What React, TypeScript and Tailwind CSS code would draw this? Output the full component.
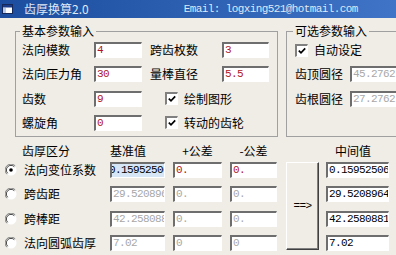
import type { ReactNode } from "react";

const cjk = "font-['Noto_Sans_CJK_SC',sans-serif] text-[12px] leading-[14px]";
const mono = "font-['Liberation_Mono',monospace] text-[11px] tracking-[-0.6px]";

type Tone = "red" | "gray" | "dark";

const toneClass: Record<Tone, string> = {
  red: "text-[#b0141e]",
  gray: "text-[#a8a8a8]",
  dark: "text-black",
};

function Field({
  value,
  w,
  tone = "red",
  selected = false,
}: {
  value: string;
  w: string;
  tone?: Tone;
  selected?: boolean;
}) {
  return (
    <div
      className={`${w} h-4 shrink-0 overflow-hidden whitespace-nowrap border-t-2 border-l-2 border-r border-b border-t-[#6e6e6e] border-l-[#6e6e6e] border-r-white border-b-white ${
        selected ? "bg-[#d7e6f6]" : "bg-white"
      }`}
    >
      <span
        className={`block ${mono} leading-[13px] ${toneClass[tone]} ${
          selected ? "-ml-[3px]" : "pl-[1px]"
        }`}
      >
        {value}
      </span>
    </div>
  );
}

function Check({ label }: { label: string }) {
  return (
    <div className="flex items-center">
      <span className="flex h-[13px] w-[13px] shrink-0 items-center justify-center border-t-2 border-l-2 border-r border-b border-t-[#808080] border-l-[#808080] border-r-white border-b-white bg-white">
        <svg width="8" height="8" viewBox="0 0 8 8">
          <path d="M0.8 3.6 L3 5.8 L7.2 1.4" stroke="#000" strokeWidth="1.7" fill="none" />
        </svg>
      </span>
      <span className={`ml-[6px] ${cjk} text-black`}>{label}</span>
    </div>
  );
}

function Radio({ on }: { on?: boolean }) {
  return (
    <svg width="12" height="12" viewBox="0 0 12 12" className="shrink-0">
      <circle cx="6" cy="6" r="5.5" fill="#fff" />
      <path d="M10.2 1.8 A5.8 5.8 0 0 0 1.8 10.2" stroke="#808080" strokeWidth="1" fill="none" />
      <path d="M9.3 2.7 A4.5 4.5 0 0 0 2.7 9.3" stroke="#404040" strokeWidth="1" fill="none" />
      {on && <circle cx="6" cy="6" r="1.8" fill="#000" />}
    </svg>
  );
}

function Group({ title, className, children }: { title: string; className: string; children: ReactNode }) {
  return (
    <fieldset className={`h-[113px] shrink-0 border border-[#a0a0a0] pt-[4px] ${className}`}>
      <legend className={`-ml-[2px] px-[2px] ${cjk} text-black`}>{title}</legend>
      {children}
    </fieldset>
  );
}

const rows = [
  { label: "法向变位系数", base: "0.15952506", tone: "dark" as Tone, plus: "0.", minus: "0.", on: true },
  { label: "跨齿距", base: "29.5208964", tone: "gray" as Tone, plus: "0.", minus: "0." },
  { label: "跨棒距", base: "42.2580881", tone: "gray" as Tone, plus: "0.", minus: "0." },
  { label: "法向圆弧齿厚", base: "7.02", tone: "gray" as Tone, plus: "0", minus: "0" },
];

const results = ["0.15952506", "29.5208964", "42.2580881", "7.02"];

export default function App() {
  return (
    <div className="flex h-[255px] w-[396px] flex-col overflow-hidden bg-[#efede6]">
      {/* title bar */}
      <div className="flex h-[18px] shrink-0 items-center bg-gradient-to-r from-[#1c4d9e] to-[#3f74c6] text-[#dfe8f7]">
        <svg width="11" height="10" viewBox="0 0 11 10" className="ml-[2px]">
          <rect x="0.5" y="0.5" width="10" height="9" fill="#fff" stroke="#16285a" />
          <rect x="1" y="1" width="9" height="2.5" fill="#1a3a8a" />
          <rect x="1" y="4" width="3" height="5" fill="#b8c8e8" />
        </svg>
        <span className={`ml-[11px] ${cjk}`}>齿厚换算2.0</span>
        <span className={`ml-[95px] ${mono}`}>Email: logxing521@hotmail.com</span>
      </div>

      {/* parameter groups */}
      <div className="mt-[6px] flex pl-[15px]">
        <Group title="基本参数输入" className="w-[263px] pl-[6px]">
          <div className="flex flex-col gap-[8.3px]">
            <div className="flex items-center">
              <span className={`w-[72px] ${cjk}`}>法向模数</span>
              <Field value="4" w="w-[48px]" />
              <span className={`ml-2 w-[72px] ${cjk}`}>跨齿枚数</span>
              <Field value="3" w="w-[47px]" />
            </div>
            <div className="flex items-center">
              <span className={`w-[72px] ${cjk}`}>法向压力角</span>
              <Field value="30" w="w-[48px]" />
              <span className={`ml-2 w-[72px] ${cjk}`}>量棒直径</span>
              <Field value="5.5" w="w-[47px]" />
            </div>
            <div className="flex items-center">
              <span className={`w-[72px] ${cjk}`}>齿数</span>
              <Field value="9" w="w-[48px]" />
              <div className="ml-[23px]">
                <Check label="绘制图形" />
              </div>
            </div>
            <div className="flex items-center">
              <span className={`w-[72px] ${cjk}`}>螺旋角</span>
              <Field value="0" w="w-[48px]" />
              <div className="ml-[23px]">
                <Check label="转动的齿轮" />
              </div>
            </div>
          </div>
        </Group>

        <Group title="可选参数输入" className="ml-2 w-[120px] pl-2">
          <div className="flex flex-col gap-[8.3px]">
            <div className="flex h-4 items-center">
              <Check label="自动设定" />
            </div>
            <div className="flex items-center">
              <span className={`w-[55px] ${cjk}`}>齿顶圆径</span>
              <Field value="45.2762" w="w-[60px]" tone="gray" />
            </div>
            <div className="flex items-center">
              <span className={`w-[55px] ${cjk}`}>齿根圆径</span>
              <Field value="27.2762" w="w-[60px]" tone="gray" />
            </div>
          </div>
        </Group>
      </div>

      {/* tooth thickness section */}
      <div className="mt-[7px] flex pl-[5px]">
        <div className="flex w-[272px] flex-col">
          <div className={`flex h-[14px] ${cjk}`}>
            <span className="w-[105px] pl-[17px]">齿厚区分</span>
            <span className="w-[55px]">基准值</span>
            <span className="ml-2 w-[49px] text-center">+公差</span>
            <span className="ml-2 w-[47px] text-center">-公差</span>
          </div>
          <div className="mt-[4px] flex flex-col gap-[8.3px]">
            {rows.map((r) => (
              <div key={r.label} className="flex items-center">
                <Radio on={r.on} />
                <span className={`ml-[7px] w-[86px] ${cjk}`}>{r.label}</span>
                <Field value={r.base} w="w-[55px]" tone={r.tone} selected={r.on} />
                <div className="ml-2">
                  <Field value={r.plus} w="w-[49px]" tone={r.on ? "red" : "gray"} />
                </div>
                <div className="ml-2">
                  <Field value={r.minus} w="w-[47px]" tone={r.on ? "red" : "gray"} />
                </div>
              </div>
            ))}
          </div>
        </div>

        <div className="ml-[9px] flex flex-col pt-[18px]">
          <button className="flex h-[88px] w-[33px] items-center justify-center border border-t-white border-l-white border-r-[#404040] border-b-[#404040] shadow-[inset_-1px_-1px_0_#808080]">
            <span className={`${mono} text-black`}>==&gt;</span>
          </button>
        </div>

        <div className="ml-[7px] flex w-[63px] flex-col">
          <span className={`h-[14px] pl-[9px] ${cjk}`}>中间值</span>
          <div className="mt-[4px] flex flex-col gap-[8.3px]">
            {results.map((v) => (
              <Field key={v} value={v} w="w-[63px]" tone="dark" />
            ))}
          </div>
        </div>
      </div>
    </div>
  );
}
